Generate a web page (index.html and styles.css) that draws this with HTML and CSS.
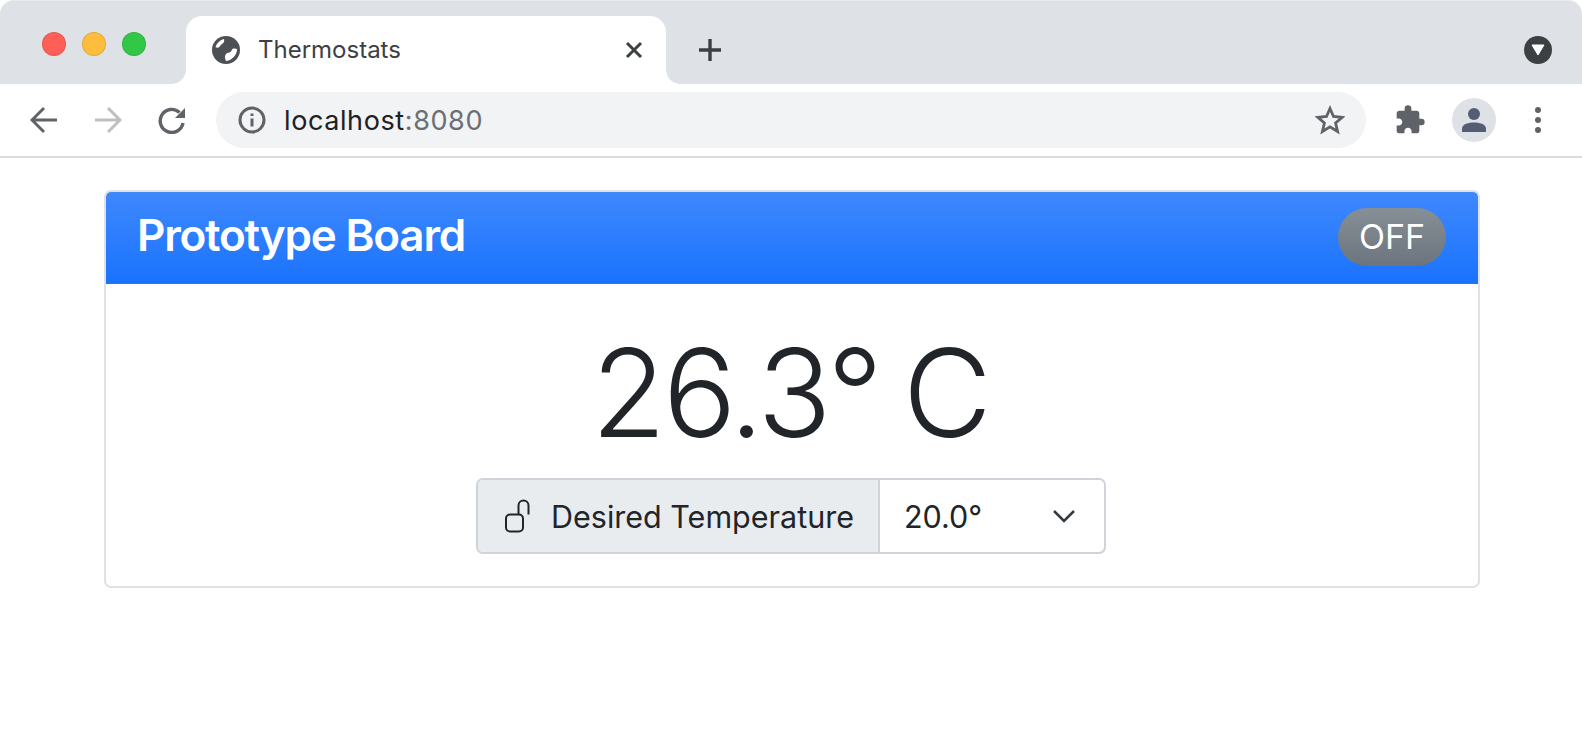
FILE: index.html
```html
<!DOCTYPE html>
<html lang="en">
<head>
    <meta charset="UTF-8">
    <title>Thermostats</title>
    <link rel="stylesheet" href="styles.css">
</head>
<body>

    <div class="tabstrip">
        <div class="lights">
            <span class="light red"></span>
            <span class="light yellow"></span>
            <span class="light green"></span>
        </div>
        <div class="tab">
            <svg class="globe" viewBox="0 0 28 28"><circle class="globe-ball" cx="14" cy="14" r="14"/><path class="globe-land" d="M3.500 11C4.800 7 8 4 12 3c.5 2 0 4-2 5s-2 3.500-4.500 3.800c-.7 0-1.500-.3-2-.8zM25 13c.3 5-4 11-11 12-1.500-3-1.500-6 .5-7.500 1-1 2.500-.5 4-1.500s1-3 3-3.500c1.500-.3 2.500 0 3.500.5z"/></svg>
            <span class="tab-title">Thermostats</span>
            <svg class="tab-close" viewBox="0 0 20 20"><path d="M3 3l14 14M17 3L3 17"/></svg>
        </div>
        <svg class="new-tab" viewBox="0 0 24 24"><path d="M12 1v22M1 12h22"/></svg>
        <div class="tabstrip-right">
            <span class="tab-search"><svg viewBox="0 0 14 12"><path d="M1 1h12L7 11z"/></svg></span>
        </div>
    </div>

    <div class="toolbar">
        <svg class="nav-icon" viewBox="0 0 28 28"><path d="M27 14H3M14 2L2 14l12 12"/></svg>
        <svg class="nav-icon faded" viewBox="0 0 28 28"><path d="M1 14h24M14 2l12 12-12 12"/></svg>
        <svg class="nav-icon reload" viewBox="0 0 28 28"><path class="thick" d="M25 17a11.500 11.500 0 1 1-3.500-10.500"/><path class="solid" d="M27 2v10H17z"/></svg>
        <div class="omnibox">
            <svg class="info" viewBox="0 0 28 28"><circle cx="14" cy="14" r="12"/><path d="M14 12.500v8M14 7.500v2.600"/></svg>
            <span class="url">localhost<span class="port">:8080</span></span>
            <svg class="star" viewBox="0 0 30 30"><path d="M15 3.500l3.500 8 8.700.8-6.600 5.700 2 8.500L15 21.900 7.400 26.500l2-8.500-6.600-5.700 8.700-.8z"/></svg>
        </div>
        <svg class="puzzle" viewBox="0 0 24 24"><path d="M20.500 11H19V7c0-1.100-.9-2-2-2h-4V3.500a2.500 2.500 0 0 0-5 0V5H4c-1.100 0-2 .9-2 2v3.800h1.500c1.500 0 2.700 1.200 2.700 2.700S5 16.200 3.500 16.200H2V20c0 1.100.9 2 2 2h3.800v-1.500c0-1.500 1.200-2.700 2.700-2.700s2.700 1.200 2.700 2.700V22H17c1.100 0 2-.9 2-2v-4h1.500a2.500 2.500 0 0 0 0-5z"/></svg>
        <span class="avatar">
            <svg viewBox="0 0 24 24"><circle cx="12" cy="6" r="6"/><path d="M0 24v-3.500C0 16 7 14.500 12 14.500s12 1.500 12 6V24z"/></svg>
        </span>
        <span class="dots"><i></i><i></i><i></i></span>
    </div>

    <div class="container">
        <div class="card">
            <div class="card-header">
                <h1 class="card-title">Prototype Board</h1>
                <button class="status-btn">OFF</button>
            </div>
            <div class="card-body">
                <div class="temperature">26.3° C</div>
                <div class="input-group">
                    <div class="input-label">
                        <svg class="lock" viewBox="0 0 27 34"><rect x="2" y="15.500" width="17" height="17" rx="4"/><path d="M14.500 15V6.500a5 5 0 0 1 10 0v9"/></svg>
                        Desired Temperature
                    </div>
                    <div class="temp-select">
                        <span>20.0°</span>
                        <svg class="chevron" viewBox="0 0 24 14"><path d="M2 2l10 10L22 2"/></svg>
                    </div>
                </div>
            </div>
        </div>
    </div>

</body>
</html>
```

FILE: styles.css
```css
body {
    font-family: 'Inter', 'Liberation Sans', sans-serif;
    margin: 0;
    padding: 0;
    background-color: #FFFFFF;
    color: #212529;
}

/* browser window */

.tabstrip {
    display: flex;
    align-items: flex-end;
    height: 84px;
    box-sizing: border-box;
    background-color: #DEE1E6;
    border-top: 1px solid #E9EBEE;
    border-radius: 14px 14px 0 0;
}

.lights {
    display: flex;
    gap: 16px;
    width: 186px;
    box-sizing: border-box;
    padding: 0 0 28px 42px;
}

.light {
    width: 24px;
    height: 24px;
    box-sizing: border-box;
    border-radius: 50%;
    border: 1px solid rgba(0, 0, 0, 0.1);
}

.red { background-color: #FF5F57; }
.yellow { background-color: #FFBD3E; }
.green { background-color: #33C748; }

.tab {
    position: relative;
    display: flex;
    align-items: center;
    width: 480px;
    height: 68px;
    box-sizing: border-box;
    padding: 0 22px 0 26px;
    background-color: #FFFFFF;
    border-radius: 16px 16px 0 0;
}

.tab::before,
.tab::after {
    content: "";
    position: absolute;
    bottom: 0;
    width: 14px;
    height: 14px;
}

.tab::before {
    left: -14px;
    background: radial-gradient(circle at 0 0, transparent 13.5px, #FFFFFF 14px);
}

.tab::after {
    right: -14px;
    background: radial-gradient(circle at 100% 0, transparent 13.5px, #FFFFFF 14px);
}

.globe {
    width: 28px;
    height: 28px;
    margin-right: 18px;
}

.globe-ball {
    fill: #4D5156;
}

.globe-land {
    fill: #FFFFFF;
}

.tab-title {
    flex: 1;
    margin-bottom: 2px;
    font-size: 24px;
    color: #3C4043;
}

.tab-close {
    width: 20px;
    height: 20px;
    fill: none;
    stroke: #3C4043;
    stroke-width: 3;
}

.new-tab {
    width: 24px;
    height: 24px;
    margin: 0 0 22px 32px;
    fill: none;
    stroke: #3C4043;
    stroke-width: 3.400;
}

.tabstrip-right {
    flex: 1;
    display: flex;
    justify-content: flex-end;
    padding: 0 30px 20px 0;
}

.tab-search {
    display: flex;
    align-items: center;
    justify-content: center;
    width: 28px;
    height: 28px;
    border-radius: 50%;
    background-color: #3C4043;
}

.tab-search svg {
    width: 14px;
    height: 12px;
    fill: #FFFFFF;
    stroke: #FFFFFF;
    stroke-linejoin: round;
}

.toolbar {
    display: flex;
    align-items: center;
    height: 72px;
    box-sizing: border-box;
    padding: 0 30px;
    background-color: #FFFFFF;
}

.nav-icon {
    width: 28px;
    height: 28px;
    margin-right: 36px;
    fill: none;
    stroke: #5F6368;
    stroke-width: 3;
}

.nav-icon.faded {
    stroke: #BDBFC1;
}

.nav-icon .thick {
    stroke-width: 3.400;
}

.nav-icon .solid {
    fill: #5F6368;
    stroke: none;
}

.reload {
    margin-right: 30px;
}

.omnibox {
    display: flex;
    align-items: center;
    width: 1150px;
    height: 56px;
    box-sizing: border-box;
    padding: 0 21px 0 22px;
    margin-right: 28px;
    border-radius: 28px;
    background-color: #F1F3F4;
}

.info {
    width: 28px;
    height: 28px;
    margin-right: 18px;
    fill: none;
    stroke: #5F6368;
    stroke-width: 3;
}

.url {
    flex: 1;
    font-size: 27px;
    letter-spacing: 0.6px;
    color: #202124;
}

.port {
    color: #6B6F73;
}

.star {
    width: 30px;
    height: 30px;
    fill: none;
    stroke: #5F6368;
    stroke-width: 2.800;
}

.puzzle {
    width: 32px;
    height: 32px;
    margin-right: 26px;
    fill: #5F6368;
}

.avatar {
    display: flex;
    justify-content: center;
    align-items: center;
    width: 44px;
    height: 44px;
    margin-right: 39px;
    border-radius: 50%;
    background-color: #DEE1E6;
}

.avatar svg {
    width: 24px;
    height: 24px;
    fill: #535E74;
}

.dots {
    display: flex;
    flex-direction: column;
    gap: 4px;
}

.dots i {
    width: 6px;
    height: 6px;
    border-radius: 50%;
    background-color: #5F6368;
}

/* page */

.container {
    padding: 32px 102px 0 104px;
    border-top: 2px solid #DCDCDC;
}

.card {
    border: 2px solid #DEE2E6;
    border-radius: 7px;
    overflow: hidden;
}

.card-header {
    display: flex;
    align-items: center;
    justify-content: space-between;
    height: 89px;
    padding: 0 32px 2px 31px;
    background: linear-gradient(180deg, #3F88FD, #1A73FD);
    border-bottom: 1px solid #3B74C8;
}

.card-title {
    margin: 0 0 4px;
    font-size: 44px;
    font-weight: 600;
    letter-spacing: -1.2px;
    color: #FFFFFF;
}

.status-btn {
    width: 108px;
    height: 58px;
    padding: 0;
    border: none;
    border-radius: 29px;
    font-family: inherit;
    font-size: 34px;
    color: #FFFFFF;
    background: linear-gradient(180deg, #868E96, #6C757D);
}

.card-body {
    display: flex;
    flex-direction: column;
    align-items: center;
    height: 302px;
}

.temperature {
    margin: 23px 4px 0 0;
    font-size: 122px;
    font-weight: 300;
    line-height: 171px;
    letter-spacing: -3px;
    word-spacing: -8px;
}

.input-group {
    display: flex;
    height: 76px;
    margin-right: 2px;
    box-sizing: border-box;
    border: 2px solid #CED4DA;
    border-radius: 7px;
    font-size: 30.5px;
    overflow: hidden;
}

.input-label {
    display: flex;
    align-items: center;
    gap: 20px;
    width: 402px;
    box-sizing: border-box;
    padding-left: 26px;
    background-color: #E9ECEF;
    border-right: 2px solid #CED4DA;
}

.lock {
    width: 27px;
    height: 34px;
    fill: none;
    stroke: #212529;
    stroke-width: 2;
}

.temp-select {
    display: flex;
    align-items: center;
    justify-content: space-between;
    width: 224px;
    box-sizing: border-box;
    padding: 0 28px 0 24px;
}

.chevron {
    width: 24px;
    height: 14px;
    fill: none;
    stroke: #343A40;
    stroke-width: 2.500;
}
```
